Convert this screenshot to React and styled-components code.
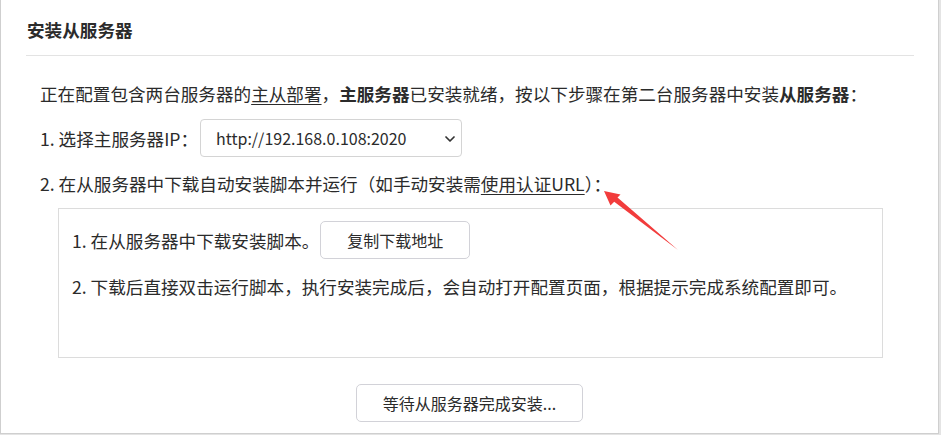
import React from "react";
import styled, { createGlobalStyle } from "styled-components";
import { ChevronDown } from "lucide-react";

const GlobalStyle = createGlobalStyle`
  html, body {
    margin: 0;
    padding: 0;
    background: #e4e4e4;
  }
  body {
    font-family: "Noto Sans CJK SC", "Noto Sans", sans-serif;
    color: #2b2b2b;
    font-size: 17.6px;
  }
`;

const Card = styled.section`
  position: relative;
  width: 937px;
  background: #fff;
  border-left: 1px solid #cfcfcf;
  border-right: 1px solid #cfcfcf;
  border-bottom: 1px solid #cfcfcf;
  padding-bottom: 11px;
`;

const Header = styled.header`
  margin: 0 24px 0 25px;
  height: 56px;
  padding-top: 4px;
  box-sizing: border-box;
  display: flex;
  align-items: center;
  border-bottom: 1px solid #e3e3e3;
`;

const Title = styled.h2`
  margin: 0 0 0 1px;
  font-size: 17.6px;
  font-weight: 700;
  line-height: 24px;
`;

const Body = styled.div`
  padding-left: 39px;
`;

const Line = styled.p`
  margin: ${(p) => p.$top || 0}px 0 0 0;
  line-height: 24px;
  white-space: nowrap;
`;

const U = styled.span`
  text-decoration: underline;
  text-underline-offset: 3px;
`;

const B = styled.b`
  font-weight: 700;
`;

const Row = styled.div`
  display: flex;
  align-items: center;
  gap: ${(p) => p.$gap || 0}px;
  margin-top: ${(p) => p.$top || 0}px;
  white-space: nowrap;
`;

const SelectWrap = styled.div`
  position: relative;
  width: 262px;
  height: 38px;
  margin-left: 2px;
`;

const Select = styled.select`
  appearance: none;
  width: 100%;
  height: 100%;
  box-sizing: border-box;
  border: 1px solid #d4d4d4;
  border-radius: 4px;
  background: #fff;
  padding: 0 30px 0 15px;
  font-family: inherit;
  font-size: 16px;
  color: #2b2b2b;
  outline: none;
`;

const Chevron = styled(ChevronDown)`
  position: absolute;
  right: 4px;
  top: 12px;
  pointer-events: none;
  color: #333;
`;

const Steps = styled.div`
  margin: 12px 0 0 18px;
  width: 825px;
  height: 150px;
  box-sizing: border-box;
  border: 1px solid #dcdcdc;
  padding: 12px 0 0 13px;
`;

const Button = styled.button`
  height: 38px;
  box-sizing: border-box;
  padding: 0 ${(p) => p.$pad || 26}px;
  border: 1px solid #d2d2d8;
  border-radius: 5px;
  background: #fff;
  font-family: inherit;
  font-size: 16px;
  color: #2b2b2b;
  cursor: pointer;
`;

const Footer = styled.div`
  display: flex;
  justify-content: center;
  margin-top: 26px;
`;

const Pointer = styled.svg`
  position: absolute;
  left: 598px;
  top: 186px;
  pointer-events: none;
`;

function RedArrow() {
  return (
    <Pointer width="90" height="72" viewBox="598 186 90 72">
      <polygon
        points="603,191 609.5,205.5 613.2,201.8 677,250 616.5,197.5 619.5,194.5"
        fill="#f23c3c"
      />
    </Pointer>
  );
}

export default function App() {
  return (
    <>
      <GlobalStyle />
      <Card>
        <Header>
          <Title>安装从服务器</Title>
        </Header>
        <Body>
          <Line $top={26}>
            正在配置包含两台服务器的<U>主从部署</U>，<B>主服务器</B>
            已安装就绪，按以下步骤在第二台服务器中安装<B>从服务器</B>：
          </Line>
          <Row $top={13}>
            <span>1. 选择主服务器IP：</span>
            <SelectWrap>
              <Select defaultValue="http://192.168.0.108:2020">
                <option>http://192.168.0.108:2020</option>
              </Select>
              <Chevron size={16} strokeWidth={2.6} />
            </SelectWrap>
          </Row>
          <Line $top={15}>
            2. 在从服务器中下载自动安装脚本并运行（如手动安装需<U>使用认证URL</U>）：
          </Line>
          <Steps>
            <Row $gap={1}>
              <span>1. 在从服务器中下载安装脚本。</span>
              <Button>复制下载地址</Button>
            </Row>
            <Line $top={16}>
              2. 下载后直接双击运行脚本，执行安装完成后，会自动打开配置页面，根据提示完成系统配置即可。
            </Line>
          </Steps>
        </Body>
        <Footer>
          <Button>等待从服务器完成安装...</Button>
        </Footer>
        <RedArrow />
      </Card>
    </>
  );
}
